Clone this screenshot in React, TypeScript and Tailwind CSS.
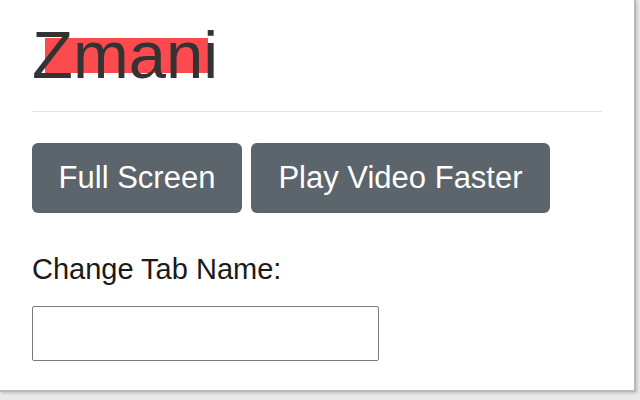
import React from 'react';

const App = () => {
  return (
    <div className="w-[640px] h-[400px] bg-[#e9e9e9] overflow-hidden font-['Liberation_Sans',Arial,sans-serif]">
      {/* Popup */}
      <div className="w-[636px] h-[392px] bg-white border-r-2 border-b-2 border-[#b9b9b9] shadow-[1px_1px_3px_rgba(0,0,0,0.2)] px-8 pt-[17px]">
        {/* Title */}
        <div className="relative h-[76px]">
          <div className="absolute left-[13px] top-[21px] w-[163px] h-[35px] bg-[#fb4b4e]" />
          <h1 className="relative text-[67px] leading-[76px] text-[#333333]">Zmani</h1>
        </div>
        <hr className="mt-[18px] border-t border-[#e4e4e4]" />

        {/* Buttons */}
        <div className="mt-[31px] flex gap-[9px]">
          <button className="h-[70px] w-[210px] rounded-[6px] bg-[#5c646c] text-white text-[31px]">
            Full Screen
          </button>
          <button className="h-[70px] w-[299px] rounded-[6px] bg-[#5c646c] text-white text-[31px]">
            Play Video Faster
          </button>
        </div>

        {/* Tab name */}
        <label className="block mt-[39px] text-[29px] leading-[34px] text-[#1a1a1a]">Change Tab Name:</label>
        <input
          type="text"
          className="mt-[20px] block w-[347px] h-[55px] border border-[#7a7a7a] rounded-[2px] bg-white"
        />
      </div>
    </div>
  );
};

export default App;
